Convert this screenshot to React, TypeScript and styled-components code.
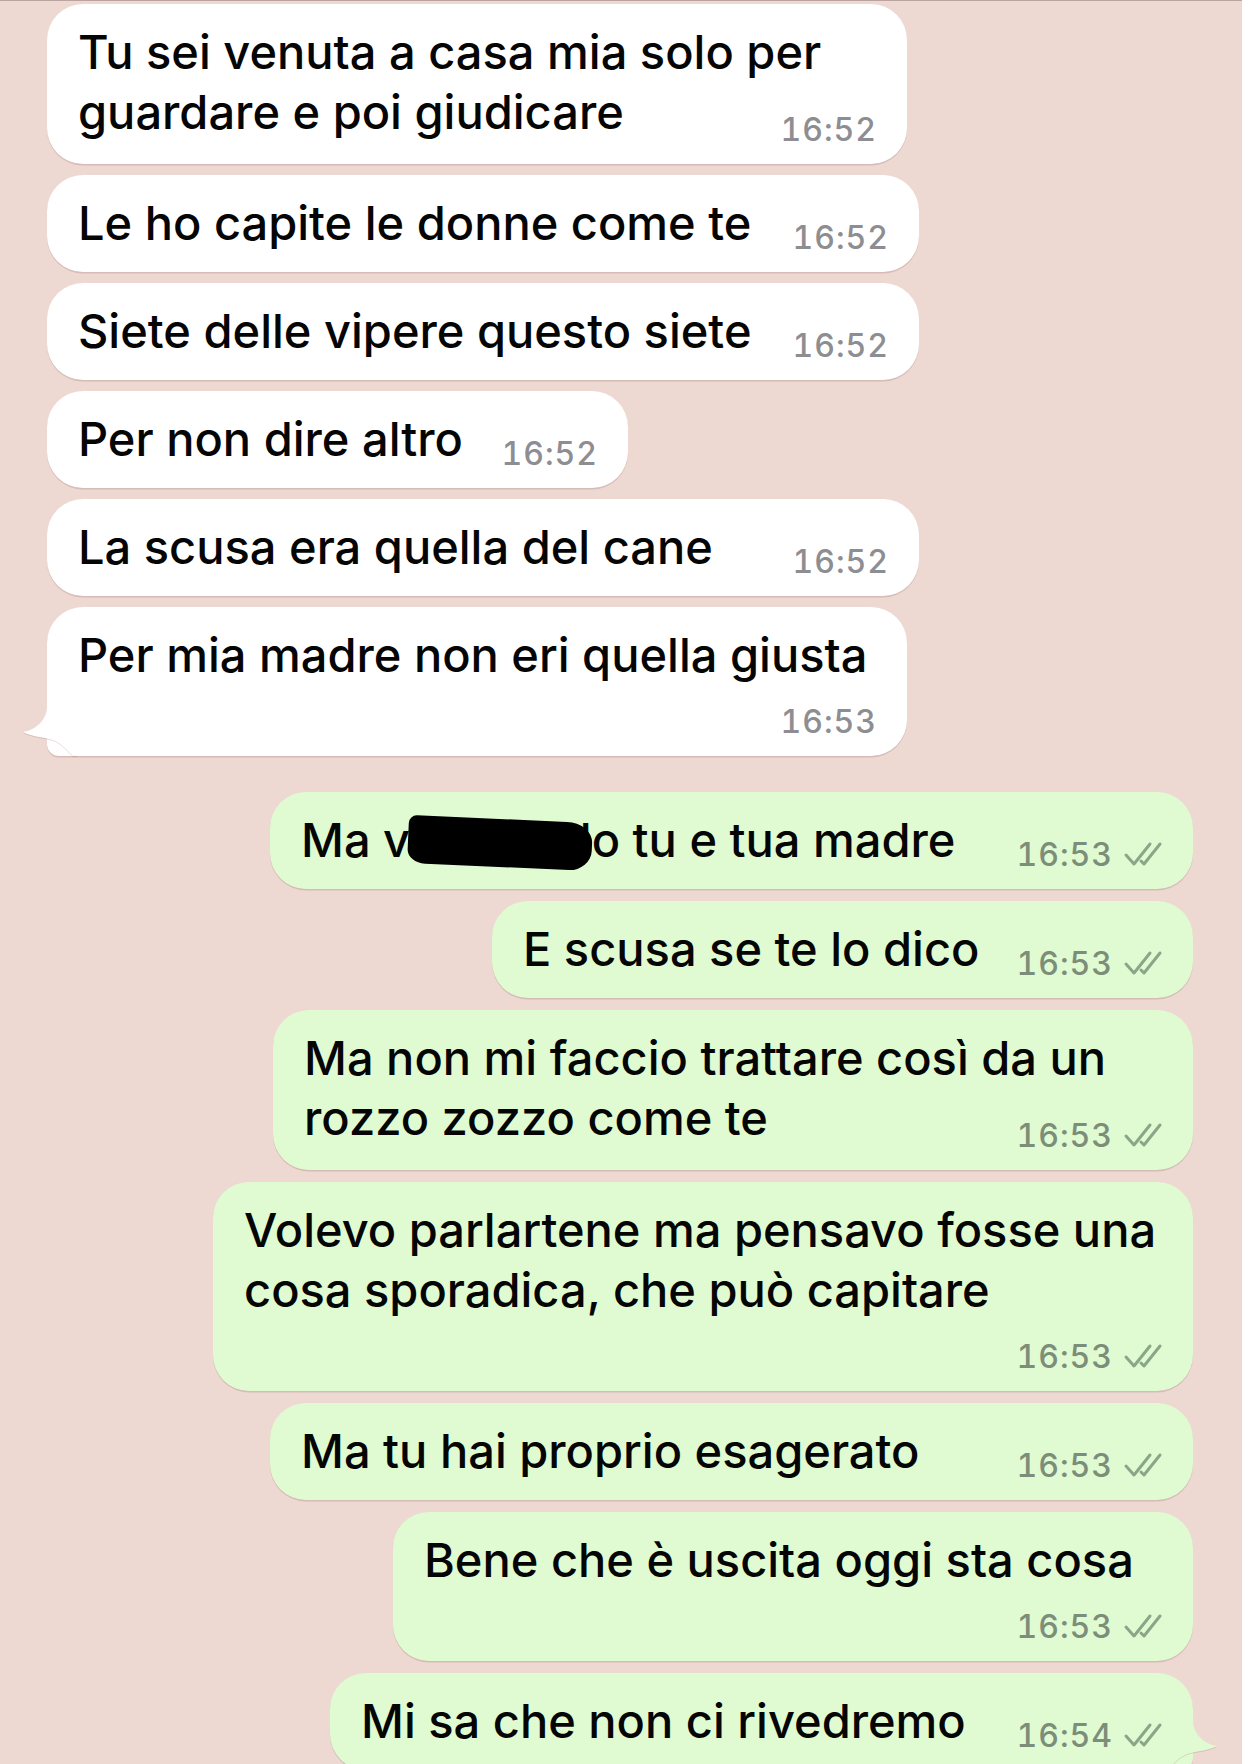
import React from "react";
import styled, { createGlobalStyle, css } from "styled-components";

type Side = "in" | "out";
type Layout = "inline" | "multi" | "stacked";

interface Message {
  side: Side;
  w: number;
  time: string;
  layout: Layout;
  tail?: boolean;
  content: React.ReactNode;
}

const GlobalStyle = createGlobalStyle`
  html, body {
    margin: 0;
    padding: 0;
    overflow: hidden;
    background: #eed8d2;
  }
  body {
    font-family: Inter, "Noto Sans", sans-serif;
    -webkit-font-smoothing: antialiased;
  }
`;

const Screen = styled.div`
  width: 1242px;
  height: 1764px;
  box-sizing: border-box;
  border-top: 1px solid #b9a49f;
  padding: 3px 49px 0 47px;
  display: flex;
  flex-direction: column;
  background: #eed8d2;
  overflow: hidden;
`;

const Group = styled.div<{ $side: Side }>`
  display: flex;
  flex-direction: column;
  gap: ${(p) => (p.$side === "in" ? 11 : 12)}px;
  align-items: ${(p) => (p.$side === "in" ? "flex-start" : "flex-end")};
  & + & {
    margin-top: 36px;
  }
`;

const Bubble = styled.div<{ $side: Side; $w: number; $tail?: boolean }>`
  position: relative;
  box-sizing: border-box;
  width: ${(p) => p.$w}px;
  display: grid;
  padding: 18px 30px 19px 31px;
  border-radius: 36px;
  background: ${(p) => (p.$side === "in" ? "#ffffff" : "#e0fbd1")};
  box-shadow: 0 1.5px 0.5px rgba(130, 90, 80, 0.22);
  ${(p) =>
    p.$tail &&
    p.$side === "in" &&
    css`
      border-bottom-left-radius: 12px;
    `}
  ${(p) =>
    p.$tail &&
    p.$side === "out" &&
    css`
      border-bottom-right-radius: 12px;
    `}
`;

const Tail = styled.svg<{ $side: Side }>`
  position: absolute;
  bottom: 0;
  width: 56px;
  height: 56px;
  ${(p) =>
    p.$side === "in"
      ? css`
          left: -26px;
        `
      : css`
          right: -26px;
          transform: scaleX(-1);
        `}
  filter: drop-shadow(0 1.5px 0.4px rgba(130, 90, 80, 0.2));
`;

const Text = styled.div<{ $layout: Layout }>`
  grid-area: 1 / 1;
  position: relative;
  font-size: 47px;
  font-weight: 500;
  line-height: 60px;
  color: #050505;
  white-space: nowrap;
  padding-bottom: ${(p) =>
    p.$layout === "stacked" ? 52 : p.$layout === "multi" ? 3 : 0}px;
`;

const Meta = styled.div<{ $side: Side }>`
  grid-area: 1 / 1;
  justify-self: end;
  align-self: end;
  display: flex;
  align-items: flex-end;
  gap: 10px;
  font-size: 32px;
  font-weight: 500;
  line-height: 31px;
  letter-spacing: 1px;
  font-variant-numeric: tabular-nums;
  color: ${(p) => (p.$side === "in" ? "#8d8d92" : "#7c8e7a")};
  position: relative;
`;

const Checks = styled.svg`
  width: 40px;
  height: 27px;
  margin-bottom: 3px;
`;

const Redacted = styled.span`
  position: relative;
  &::after {
    content: "";
    position: absolute;
    left: -2px;
    right: -12px;
    top: 8px;
    bottom: 1px;
    background: #000;
    border-radius: 8px 26px 22px 18px / 8px 20px 20px 14px;
    transform: rotate(2.5deg);
  }
`;

const TailShape: React.FC<{ side: Side }> = ({ side }) => (
  <Tail $side={side} viewBox="0 0 56 56" aria-hidden>
    <path
      d="M26 0 L26 6 C26 20 15 30 2 32 C8 36 22 37 32 40 C40 43 46 50 52 56 L56 56 L56 0 Z"
      fill={side === "in" ? "#ffffff" : "#e0fbd1"}
    />
  </Tail>
);

const DoubleCheck: React.FC = () => (
  <Checks viewBox="0 0 40 27" aria-hidden>
    <g
      fill="none"
      stroke="#8aa688"
      strokeWidth={3}
      strokeLinecap="round"
      strokeLinejoin="round"
    >
      <path d="M3 15 L11 24 L27 4" />
      <path d="M18 21 L21 24 L37 4" />
    </g>
  </Checks>
);

const messages: Message[] = [
  {
    side: "in",
    w: 860,
    time: "16:52",
    layout: "multi",
    content: (
      <>
        Tu sei venuta a casa mia solo per
        <br />
        guardare e poi giudicare
      </>
    ),
  },
  { side: "in", w: 872, time: "16:52", layout: "inline", content: "Le ho capite le donne come te" },
  { side: "in", w: 872, time: "16:52", layout: "inline", content: "Siete delle vipere questo siete" },
  { side: "in", w: 581, time: "16:52", layout: "inline", content: "Per non dire altro" },
  { side: "in", w: 872, time: "16:52", layout: "inline", content: "La scusa era quella del cane" },
  {
    side: "in",
    w: 860,
    time: "16:53",
    layout: "stacked",
    tail: true,
    content: "Per mia madre non eri quella giusta",
  },
  {
    side: "out",
    w: 923,
    time: "16:53",
    layout: "inline",
    content: (
      <>
        Ma v<Redacted>affancu</Redacted>lo tu e tua madre
      </>
    ),
  },
  { side: "out", w: 701, time: "16:53", layout: "inline", content: "E scusa se te lo dico" },
  {
    side: "out",
    w: 920,
    time: "16:53",
    layout: "multi",
    content: (
      <>
        Ma non mi faccio trattare così da un
        <br />
        rozzo zozzo come te
      </>
    ),
  },
  {
    side: "out",
    w: 980,
    time: "16:53",
    layout: "stacked",
    content: (
      <>
        Volevo parlartene ma pensavo fosse una
        <br />
        cosa sporadica, che può capitare
      </>
    ),
  },
  { side: "out", w: 923, time: "16:53", layout: "inline", content: "Ma tu hai proprio esagerato" },
  { side: "out", w: 800, time: "16:53", layout: "stacked", content: "Bene che è uscita oggi sta cosa" },
  {
    side: "out",
    w: 863,
    time: "16:54",
    layout: "inline",
    tail: true,
    content: "Mi sa che non ci rivedremo",
  },
];

const MessageBubble: React.FC<{ m: Message }> = ({ m }) => (
  <Bubble $side={m.side} $w={m.w} $tail={m.tail}>
    {m.tail && <TailShape side={m.side} />}
    <Text $layout={m.layout}>{m.content}</Text>
    <Meta $side={m.side}>
      <span>{m.time}</span>
      {m.side === "out" && <DoubleCheck />}
    </Meta>
  </Bubble>
);

export default function App() {
  const incoming = messages.filter((m) => m.side === "in");
  const outgoing = messages.filter((m) => m.side === "out");
  return (
    <>
      <GlobalStyle />
      <Screen>
        <Group $side="in">
          {incoming.map((m, i) => (
            <MessageBubble key={`in-${i}`} m={m} />
          ))}
        </Group>
        <Group $side="out">
          {outgoing.map((m, i) => (
            <MessageBubble key={`out-${i}`} m={m} />
          ))}
        </Group>
      </Screen>
    </>
  );
}
